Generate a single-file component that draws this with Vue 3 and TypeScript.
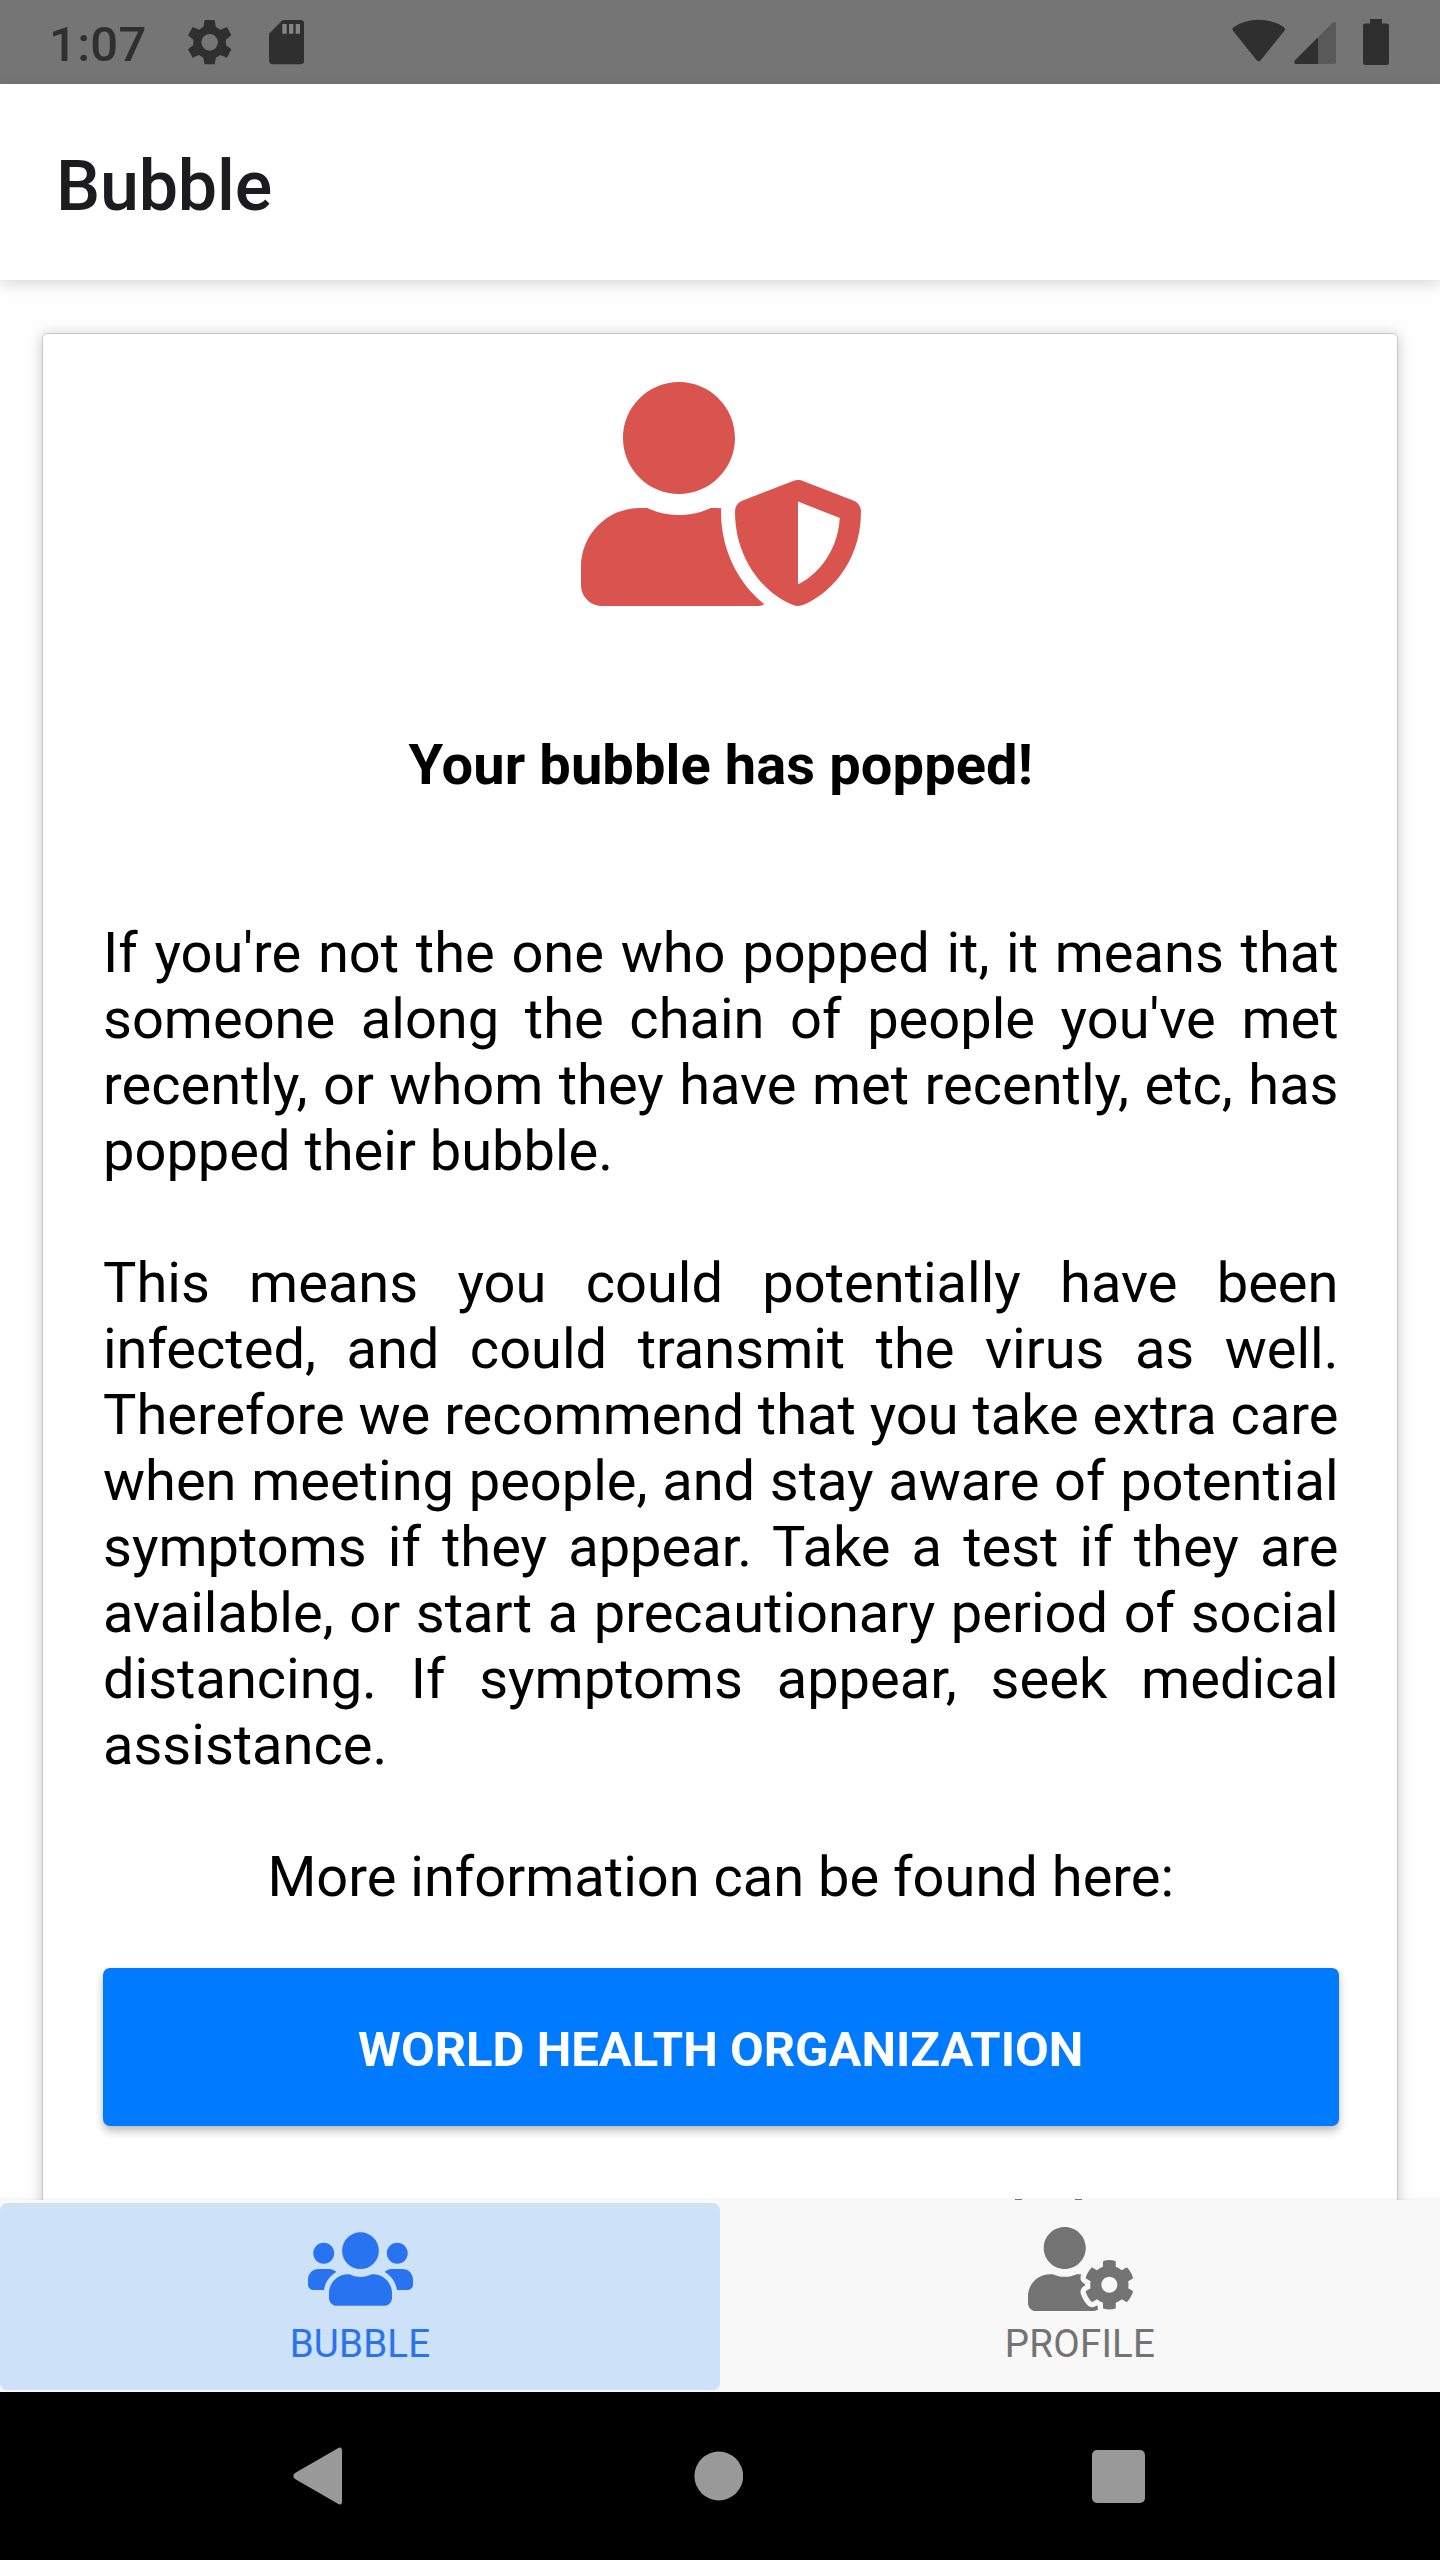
<script setup lang="ts">
interface Tab {
  label: string
  icon: string
  active: boolean
}

const USERS =
  'M96 224c35.3 0 64-28.7 64-64s-28.7-64-64-64-64 28.7-64 64 28.7 64 64 64zm448 0c35.3 0 64-28.7 64-64s-28.7-64-64-64-64 28.7-64 64 28.7 64 64 64zm32 32h-64c-17.6 0-33.5 7.1-45.1 18.6 40.3 22.1 68.9 62 75.1 109.4h66c17.7 0 32-14.3 32-32v-32c0-35.3-28.7-64-64-64zm-256 0c61.9 0 112-50.1 112-112S381.9 32 320 32 208 82.1 208 144s50.1 112 112 112zm76.8 32h-8.3c-20.8 10-43.9 16-68.5 16s-47.6-6-68.5-16h-8.3C179.6 288 128 339.6 128 403.2V432c0 26.5 21.5 48 48 48h288c26.5 0 48-21.5 48-48v-28.8c0-63.6-51.6-115.2-115.2-115.2zm-223.7-13.4C161.5 263.1 145.6 256 128 256H64c-35.3 0-64 28.7-64 64v32c0 17.7 14.3 32 32 32h65.9c6.3-47.4 34.9-87.3 75.2-109.4z'
const USER_COG =
  'M610.5 373.3c2.6-14.1 2.6-28.5 0-42.6l25.8-14.9c3-1.7 4.3-5.2 3.3-8.5-6.7-21.6-18.2-41.2-33.2-57.4-2.3-2.5-6-3.1-9-1.4l-25.8 14.9c-10.9-9.3-23.4-16.5-36.9-21.3v-29.8c0-3.4-2.4-6.4-5.7-7.1-22.3-5-45-4.8-66.2 0-3.3.7-5.7 3.7-5.7 7.1v29.8c-13.5 4.8-26 12-36.9 21.3l-25.8-14.9c-2.9-1.7-6.7-1.1-9 1.4-15 16.2-26.5 35.8-33.2 57.4-1 3.3.4 6.8 3.3 8.5l25.8 14.9c-2.6 14.1-2.6 28.5 0 42.6l-25.8 14.9c-3 1.7-4.3 5.2-3.3 8.5 6.7 21.6 18.2 41.1 33.2 57.4 2.3 2.5 6 3.1 9 1.4l25.8-14.9c10.9 9.3 23.4 16.5 36.9 21.3v29.8c0 3.4 2.4 6.4 5.7 7.1 22.3 5 45 4.8 66.2 0 3.3-.7 5.7-3.7 5.7-7.1v-29.8c13.5-4.8 26-12 36.9-21.3l25.8 14.9c2.9 1.7 6.7 1.1 9-1.4 15-16.2 26.5-35.8 33.2-57.4 1-3.3-.4-6.8-3.3-8.5l-25.8-14.9zM496 400.5c-26.8 0-48.5-21.8-48.5-48.5s21.8-48.5 48.5-48.5 48.5 21.8 48.5 48.5-21.7 48.5-48.5 48.5zM224 256c70.7 0 128-57.3 128-128S294.7 0 224 0 96 57.3 96 128s57.3 128 128 128zm201.2 226.5c-2.3-1.2-4.6-2.6-6.8-3.9l-7.9 4.6c-6 3.4-12.8 5.3-19.6 5.3-10.9 0-21.4-4.6-28.9-12.6-18.3-19.8-32.3-43.9-40.2-69.6-5.5-17.7 1.9-36.4 17.9-45.7l7.9-4.6c-.1-2.6-.1-5.2 0-7.8l-7.9-4.6c-16-9.2-23.4-28-17.9-45.7.9-2.9 2.2-5.8 3.2-8.7-3.8-.3-7.5-1.2-11.4-1.2h-16.7c-22.2 10.2-46.9 16-72.9 16s-50.6-5.8-72.9-16h-16.7C60.2 288 0 348.2 0 422.4V464c0 26.5 21.5 48 48 48h352c10.1 0 19.5-3.2 27.2-8.5-1.2-3.8-2-7.7-2-11.8v-9.2z'
const USER_SHIELD =
  'M622.3 271.1l-115.2-45c-4.1-1.6-12.6-3.7-22.2 0l-115.2 45c-10.7 4.2-17.7 14-17.7 24.9 0 111.6 68.7 188.8 132.9 213.9 9.6 3.7 18 1.6 22.2 0C558.4 489.9 640 420.5 640 296c0-10.9-7-20.7-17.7-24.9zM496 462.4V273.3l95.5 37.3c-5.6 87.1-60.9 135.4-95.5 151.8zM224 256c70.7 0 128-57.3 128-128S294.7 0 224 0 96 57.3 96 128s57.3 128 128 128zm96 40c0-2.5.8-4.8 1.1-7.2-2.5-.1-4.9-.8-7.5-.8h-16.7c-22.2 10.2-46.9 16-72.9 16s-50.6-5.8-72.9-16h-16.7C60.2 288 0 348.2 0 422.4V464c0 26.5 21.5 48 48 48h352c6.8 0 13.3-1.5 19.2-4-54-42.9-99.2-116.7-99.2-212z'

const tabs: Tab[] = [
  { label: 'Bubble', icon: USERS, active: true },
  { label: 'Profile', icon: USER_COG, active: false },
]
</script>

<template>
  <div class="screen">
    <header class="status">
      <span class="clock">1:07</span>
      <svg class="gear" viewBox="560 57 136 140">
        <path
          fill-rule="evenodd"
          d="M613 60H643L647 81L660 89L680 81L693 106L677 119V135L693 148L680 173L660 165L647 173L643 193H613L609 173L596 165L577 173L563 148L579 135V119L563 106L577 81L596 89L609 81ZM628 102A25 25 0 1 0 628 152A25 25 0 1 0 628 102Z"
        />
      </svg>
      <svg class="sd" viewBox="806 60 107 134">
        <path d="M847 60H900Q912 60 912 72V181Q912 193 900 193H818Q806 193 806 181V101Z" />
        <path class="slots" d="M846 72h13v29h-13zM866 72h13v29h-13zM886 72h13v29h-13z" />
      </svg>
      <span class="spacer"></span>
      <svg class="system" viewBox="0 0 158 47">
        <path d="M1.2 12Q-.6 10 1.6 8.3Q12 .7 26.7 .7T51.800 8.300Q54 10 52.200 12L28.700 41.300Q26.700 43.500 24.700 41.300Z" />
        <path class="faint" d="M86 18.300L100.500 3.800Q102 2.500 103.200 3.200Q104 3.700 104 5V43.200Q104 45 102.200 45H86Z" />
        <path d="M86 18.300V45H64.200Q62.400 45 62.200 43.400Q62 42.200 63 41.300Z" />
        <path d="M138 0H150V4.500H154.800Q157 4.500 157 6.800V43.700Q157 46 154.800 46H133.200Q131 46 131 43.700V6.800Q131 4.500 133.200 4.500H138Z" />
      </svg>
    </header>

    <div class="titlebar">
      <h1>Bubble</h1>
    </div>

    <main class="content">
      <section class="card">
        <svg class="hero" viewBox="0 0 640 512"><path :d="USER_SHIELD" /></svg>
        <h2>Your bubble has popped!</h2>
        <p>
          If you're not the one who popped it, it means that someone along the chain of people
          you've met recently, or whom they have met recently, etc, has popped their bubble.
        </p>
        <p class="advice">
          This means you could potentially have been infected, and could transmit the virus as
          well. Therefore we recommend that you take extra care when meeting people, and stay aware
          of potential symptoms if they appear. Take a test if they are available, or start a
          precautionary period of social distancing. If symptoms appear, seek medical assistance.
        </p>
        <p class="more">More information can be found here:</p>
        <button type="button">World Health Organization</button>
        <svg class="peek" viewBox="0 0 68 2">
          <rect x="0" y="1" width="7" height="1" />
          <rect x="60" y="1" width="7" height="1" />
        </svg>
      </section>
    </main>

    <nav class="tabs">
      <a v-for="tab in tabs" :key="tab.label" class="tab" :class="{ active: tab.active }">
        <svg viewBox="0 0 640 512"><path :d="tab.icon" /></svg>
        <span>{{ tab.label }}</span>
      </a>
    </nav>

    <footer class="system-nav">
      <svg viewBox="0 0 50 58">
        <path d="M44.500 1.500Q49 -1.500 49 4V54Q49 59.500 44.500 56.500L2 32Q-1.500 29 2 26Z" />
      </svg>
      <svg viewBox="0 0 50 50"><circle cx="25.800" cy="25" r="24.400" /></svg>
      <svg viewBox="0 0 53 53"><rect width="53" height="53" rx="5" /></svg>
    </footer>
  </div>
</template>

<style>
body {
  margin: 0;
}
</style>

<style scoped>
.screen {
  display: flex;
  flex-direction: column;
  width: 1440px;
  height: 2560px;
  overflow: hidden;
  background: #fefefe;
  font-family: Roboto, sans-serif;
  color: #000;
}
.status {
  display: flex;
  flex: none;
  align-items: flex-start;
  box-sizing: border-box;
  height: 84px;
  padding: 0 50px 0 49px;
  background: #757575;
  fill: #2f2f2f;
}
.clock {
  width: 138px;
  margin-top: 16px;
  font-size: 49px;
  line-height: 57px;
  font-weight: 500;
  letter-spacing: 0.3px;
  color: #2f2f2f;
}
.gear {
  width: 45.3px;
  height: 46.7px;
  margin-top: 19px;
}
.sd {
  width: 35.7px;
  height: 44.7px;
  margin: 20px 0 0 36.4px;
}
.slots {
  fill: #858585;
}
.spacer {
  flex: 1;
}
.system {
  width: 158px;
  height: 47px;
  margin-top: 19px;
}
.faint {
  fill: #595959;
}
.titlebar {
  display: flex;
  flex: none;
  align-items: center;
  position: relative;
  height: 196px;
  padding-left: 56px;
  background: #fff;
  box-shadow: 0 4px 14px rgba(0, 0, 0, 0.15);
}
h1 {
  margin: 8px 0 0;
  font-size: 70px;
  line-height: 82px;
  font-weight: 500;
  letter-spacing: -0.2px;
  color: #1c1c1e;
}
.content {
  flex: 1;
  min-height: 0;
  overflow: hidden;
  padding: 53px 42px 0;
}
.card {
  display: flex;
  flex-direction: column;
  box-sizing: border-box;
  height: 2000px;
  padding: 48px 58.5px 0 60px;
  border: 1px solid #c8c8c8;
  border-radius: 5px;
  background: #fff;
  box-shadow: 0 2px 14px rgba(0, 0, 0, 0.22);
}
.hero {
  align-self: center;
  flex: none;
  width: 280px;
  height: 224px;
  fill: #d9534f;
}
h2 {
  margin: 126px 0 122px;
  font-size: 56px;
  line-height: 66px;
  font-weight: 700;
  letter-spacing: 0.1px;
  text-align: center;
}
p {
  margin: 0 0 66px;
  font-size: 56px;
  line-height: 66px;
  text-align: justify;
}
.advice {
  word-spacing: -1px;
}
.more {
  margin-bottom: 58px;
  text-align: center;
}
button {
  flex: none;
  height: 158px;
  padding: 4px 0 0;
  border: 0;
  border-radius: 7px;
  background: #007aff;
  box-shadow: 0 5px 9px rgba(0, 0, 0, 0.27);
  font-family: inherit;
  font-size: 49px;
  font-weight: 700;
  text-transform: uppercase;
  color: #fff;
}
.peek {
  flex: none;
  width: 68px;
  height: 2px;
  margin: 72px 0 0 912px;
  fill: #777;
}
.tabs {
  display: flex;
  flex: none;
  position: relative;
  box-sizing: border-box;
  height: 192px;
  padding: 3px 0 2px;
  background: #f8f8f8;
  box-shadow: 0 -1px 3px rgba(0, 0, 0, 0.05);
}
.tab {
  display: flex;
  flex: 1;
  flex-direction: column;
  align-items: center;
  border-radius: 7px;
  fill: #737373;
  color: #737373;
}
.tab svg {
  width: 105px;
  height: 84px;
  margin-top: 23.5px;
}
.tab span {
  margin-top: 10.5px;
  font-size: 38.5px;
  line-height: 45px;
  letter-spacing: 0.2px;
  text-transform: uppercase;
}
.tab.active {
  background: #cde1f9;
  fill: #2874f0;
  color: #2874f0;
}
.system-nav {
  display: flex;
  flex: none;
  align-items: center;
  justify-content: space-between;
  box-sizing: border-box;
  height: 168px;
  padding: 0 295px 0 293px;
  background: #000;
  fill: #999;
}
.system-nav svg {
  width: 50px;
  height: 58px;
}
.system-nav svg + svg {
  height: 50px;
}
.system-nav svg:last-child {
  width: 53px;
  height: 53px;
}
</style>
